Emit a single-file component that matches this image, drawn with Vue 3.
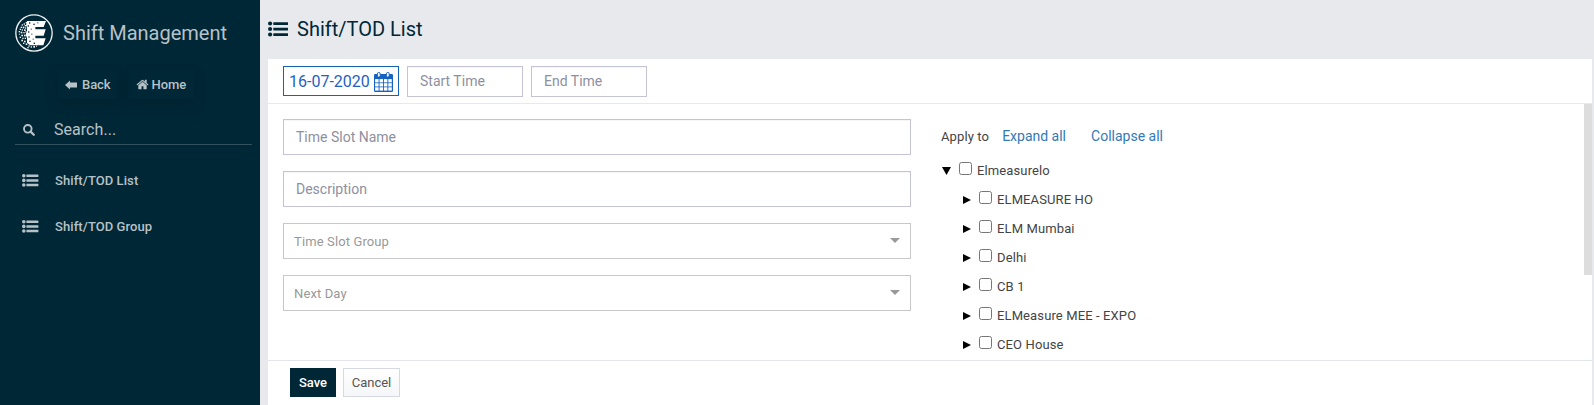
<script setup>
import { ref } from 'vue'

const menu = ['Shift/TOD List', 'Shift/TOD Group']
const sites = ref(['ELMEASURE HO', 'ELM Mumbai', 'Delhi', 'CB 1', 'ELMeasure MEE - EXPO', 'CEO House'])
// Scattered squares on the left edge of the logo: x, y, size
const dots = [
  [32, 24, 4], [26, 28, 4], [20, 31, 4], [29, 33, 4], [17, 38, 4], [23, 38, 5], [30, 40, 4],
  [14, 44, 4], [20, 46, 4], [27, 46, 5], [11, 51, 4], [17, 53, 5], [25, 54, 4], [31, 52, 4],
  [12, 59, 3], [19, 62, 5], [27, 62, 5], [14, 68, 4], [22, 71, 4], [29, 71, 4], [19, 77, 5],
  [27, 80, 5], [24, 86, 4], [32, 88, 5], [40, 94, 4], [47, 97, 4], [55, 96, 5], [37, 99, 4], [63, 95, 3],
]
const holes = [[42, 25, 4], [55, 29, 4], [67, 25, 3], [38, 34, 4], [47, 44, 3], [39, 52, 4], [49, 59, 3], [40, 67, 4], [53, 74, 3], [43, 80, 4], [56, 86, 4]]
</script>

<template>
  <div class="app">
    <aside class="side">
      <div class="brand">
        <svg class="logo" viewBox="0 0 114 114">
          <circle cx="57" cy="57" r="54.5" fill="none" stroke="#eef1f2" stroke-width="4" />
          <path d="M36 21H93L86 39H61V46H92L86 65H61V73H92L85 94H45L36 86V72L32 62L36 50V40L33 34Z" fill="#fff" />
          <rect v-for="(d, i) in dots" :key="'d' + i" :x="d[0]" :y="d[1]" :width="d[2]" :height="d[2]" fill="#f4f6f7" />
          <rect v-for="(d, i) in holes" :key="'h' + i" :x="d[0]" :y="d[1]" :width="d[2]" :height="d[2]" fill="#002736" />
        </svg>
        <span>Shift Management</span>
      </div>
      <div class="nav">
        <a class="nav-btn back">
          <svg width="12" height="10" viewBox="0 0 12 10"><path d="M0 5 5 .6V2.6H12V7.4H5V9.4Z" fill="currentColor" /></svg>
          Back
        </a>
        <a class="nav-btn home">
          <svg width="13" height="13" viewBox="0 0 1792 1792"><path fill="currentColor" d="M1472 992v480q0 26-19 45t-45 19h-384v-384h-256v384h-384q-26 0-45-19t-19-45v-480q0-1 .5-3t.5-3l575-474 575 474q1 2 1 6zm223-69l-62 74q-8 9-21 11h-3q-13 0-21-7l-692-577-692 577q-12 8-24 7-13-2-21-11l-62-74q-8-10-7-23.5t11-21.5l719-599q32-26 76-26t76 26l244 204v-195q0-14 9-23t23-9h192q14 0 23 9t9 23v408l219 182q10 8 11 21.5t-7 23.5z" /></svg>
          Home
        </a>
      </div>
      <div class="search">
        <svg width="12" height="12" viewBox="0 0 12 12"><circle cx="4.8" cy="4.8" r="3.8" fill="none" stroke="currentColor" stroke-width="1.9" /><path d="m7.6 7.6 3.2 3.2" stroke="currentColor" stroke-width="2.2" stroke-linecap="round" /></svg>
        <span>Search...</span>
      </div>
      <a v-for="m in menu" :key="m" class="item">
        <svg width="17" height="13" viewBox="0 0 17 13" fill="currentColor">
          <circle v-for="n in 3" :key="n" cx="1.8" :cy="n * 4.6 - 2.8" r="1.8" />
          <rect v-for="n in 3" :key="'r' + n" x="4.4" :y="n * 4.6 - 4" width="12" height="2.5" rx=".3" />
        </svg>
        <span>{{ m }}</span>
      </a>
    </aside>

    <main class="main">
      <header class="head">
        <svg width="20" height="16" viewBox="0 0 20 16" fill="currentColor">
          <circle v-for="n in 3" :key="n" cx="2.1" :cy="n * 5.5 - 3" r="2.1" />
          <rect v-for="n in 3" :key="'r' + n" x="5.3" :y="n * 5.5 - 4.3" width="14.7" height="2.7" rx=".3" />
        </svg>
        <h1>Shift/TOD List</h1>
      </header>
      <section class="panel">
        <div class="bar">
          <div class="date">
            <span>16-07-2020</span>
            <svg width="19" height="20" viewBox="0 0 19 20">
              <rect x="0" y="2" width="19" height="18" rx="1.2" fill="#1563c0" />
              <g fill="#fff">
                <template v-for="r in 3" :key="r">
                  <rect v-for="c in 4" :key="c" :x="c * 4.4 - 3.3" :y="r * 4.1 + 3" width="3.5" height="3.3" />
                </template>
              </g>
              <rect x="3.4" y=".5" width="2.8" height="4.6" rx="1.3" fill="#fff" stroke="#1563c0" />
              <rect x="12.4" y=".5" width="2.8" height="4.6" rx="1.3" fill="#fff" stroke="#1563c0" />
            </svg>
          </div>
          <div class="field time">Start Time</div>
          <div class="field time">End Time</div>
        </div>
        <div class="content">
          <div class="form">
            <div class="field">Time Slot Name</div>
            <div class="field">Description</div>
            <div class="field select">Time Slot Group<i></i></div>
            <div class="field select">Next Day<i></i></div>
          </div>
          <div class="apply">
            <div class="links"><span>Apply to</span><a class="expand">Expand all</a><a>Collapse all</a></div>
            <div class="node root">
              <svg width="9" height="8" viewBox="0 0 9 8"><path d="M0 0H9L4.5 8Z" /></svg>
              <b class="check"></b><span>Elmeasurelo</span>
            </div>
            <div v-for="s in sites" :key="s" class="node child">
              <svg width="8" height="8" viewBox="0 0 8 8"><path d="M0 0 8 4 0 8Z" /></svg>
              <b class="check"></b><span>{{ s }}</span>
            </div>
          </div>
          <div class="scroll"><div class="thumb"></div></div>
        </div>
        <footer class="foot">
          <button class="save">Save</button>
          <button class="cancel">Cancel</button>
        </footer>
      </section>
    </main>
  </div>
</template>

<style>
body { margin: 0; overflow: hidden; }
</style>

<style scoped>
* { box-sizing: border-box; }
.app { display: flex; width: 1594px; height: 405px; background: #e8e9ed; font: 13px Roboto, "Liberation Sans", sans-serif; }
svg { display: block; flex: none; }
.side { width: 260px; background: #002736; color: #b7c2c8; padding-top: 14px; }
.brand { display: flex; align-items: center; height: 38px; padding-left: 15px; font-size: 20px; line-height: 38px; }
.logo { width: 38px; height: 38px; margin-right: 10px; }
.nav { display: flex; gap: 9px; height: 28px; margin: 18px 0 0 57px; }
.nav-btn { display: flex; align-items: center; gap: 5px; height: 29px; padding: 0 8px; font-weight: 500; letter-spacing: -.05px; box-shadow: 0 5px 12px rgba(0, 20, 32, .25); }
.nav-btn.home { gap: 3px; }
.search { display: flex; align-items: center; height: 31px; margin: 16px 8px 0 15px; padding: 1px 0 0 8px; border-bottom: 1px solid #33525e; font-size: 16px; line-height: 29px; }
.search span { margin-left: 19px; letter-spacing: .04px; }
.item { display: flex; align-items: center; height: 46px; padding-left: 22px; font-weight: 500; letter-spacing: .08px; }
.search + .item { margin-top: 12px; }
.item span { margin-left: 16px; }
.main { width: 1332px; padding-left: 8px; }
.head { display: flex; align-items: center; height: 59px; padding-bottom: 1px; color: #002736; }
.head h1 { margin: 0 0 0 9px; font-size: 20px; font-weight: 400; line-height: 24px; }
.panel { height: 346px; background: #fff; display: flex; flex-direction: column; }
.bar { display: flex; align-items: flex-start; gap: 8px; height: 45px; padding: 7px 15px; border-bottom: 1px solid #e8e9ed; }
.date { display: flex; align-items: center; width: 116px; height: 30px; padding: 1px 5px 0 5px; justify-content: space-between; border: 1px solid #1563b5; color: #1f62c0; font-size: 16px; }
.field { display: flex; align-items: center; height: 36px; padding: 0 12px 1px; border: 1px solid #c4c4d4; color: #8e90a0; font-size: 14px; box-shadow: inset 0 1px 1px rgba(0, 0, 0, .04); }
.time { width: 116px; height: 31px; }
.content { display: flex; height: 256px; overflow: hidden; padding-left: 15px; }
.form { display: flex; flex-direction: column; gap: 16px; width: 628px; padding-top: 15px; }
.select { justify-content: space-between; padding: 1px 10px 0; border-color: #c8c8cc; color: #999; font-size: 13px; letter-spacing: .12px; box-shadow: none; }
.select i { border: 5px solid transparent; border-top-color: #999; border-bottom: 0; margin-bottom: 2px; }
.apply { flex: 1; padding: 20px 0 0 30px; color: #444; }
.links { display: flex; align-items: center; height: 24px; line-height: 24px; }
.links span { padding-top: 1px; letter-spacing: .12px; }
.links a { color: #337ab7; font-size: 14px; }
.links .expand { margin: 0 25px 0 13px; }
.node { display: flex; align-items: center; height: 29px; line-height: 29px; color: #444; letter-spacing: .12px; }
.root { margin-top: 8px; padding-left: 1px; }
.child { padding-left: 22px; }
.check { width: 13px; height: 13px; margin: 0 5px 4px 8px; border: 1px solid #767676; border-radius: 2.5px; background: #fff; }
.scroll { width: 8px; }
.thumb { height: 171px; background: #ddd; }
.foot { display: flex; gap: 7px; height: 45px; padding: 7px 0 0 22px; border-top: 1px solid #e2e5ec; }
button { height: 29px; padding: 0; font: 500 13px Roboto, sans-serif; border: 0; }
.save { width: 46px; background: #002736; color: #fff; }
.cancel { width: 57px; border: 1px solid #d6d8e2; background: linear-gradient(#fff, #f5f6f9); color: #555; font-weight: 400; }
</style>
